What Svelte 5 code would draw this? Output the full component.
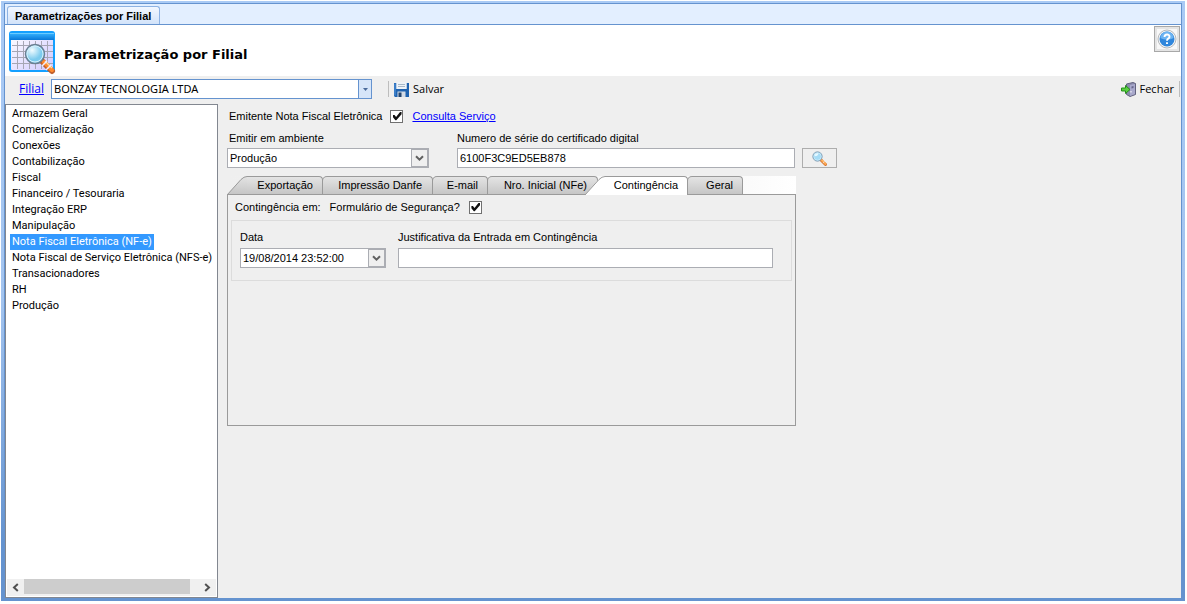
<script>
  let sections = [
    "Armazem Geral",
    "Comercialização",
    "Conexões",
    "Contabilização",
    "Fiscal",
    "Financeiro / Tesouraria",
    "Integração ERP",
    "Manipulação",
    "Nota Fiscal Eletrônica (NF-e)",
    "Nota Fiscal de Serviço Eletrônica (NFS-e)",
    "Transacionadores",
    "RH",
    "Produção",
  ];
  let tabs = [
    { name: "Exportação", size: "first" },
    { name: "Impressão Danfe", size: "wide" },
    { name: "E-mail", size: "narrow" },
    { name: "Nro. Inicial (NFe)", size: "wide" },
    { name: "Contingência", size: "medium" },
    { name: "Geral", size: "narrow" },
  ];

  let section = "Nota Fiscal Eletrônica (NF-e)";
  let tab = "Contingência";
  let emitente = true;
  let seguranca = true;
  let certificado = "6100F3C9ED5EB878";
  let data = "19/08/2014 23:52:00";
  let justificativa = "";
</script>

{#snippet chevron()}
  <svg class="chevron" width="9" height="7" viewBox="0 0 9 7" aria-hidden="true">
    <path d="M1 1.2 4.5 4.7 8 1.2" fill="none" stroke="#606060" stroke-width="2" />
  </svg>
{/snippet}

{#snippet lens(size)}
  <svg width={size} height={size} viewBox="0 0 30 30" aria-hidden="true">
    <path d="m18 18 9 9" stroke="#d0783c" stroke-width="6" stroke-linecap="round" />
    <path d="m19 18 8 8" stroke="#ffa64c" stroke-width="4" stroke-linecap="round" />
    <path d="m21 18 5 5" stroke="#ffe0b0" stroke-width="1.2" />
    <path d="m22 24 3-3" stroke="#e8e8f0" stroke-width="1.5" />
    <circle cx="11" cy="11" r="9.2" fill="#a5dcf6" stroke="#6d8ba6" stroke-width="1.8" />
    <circle cx="11" cy="11" r="7.6" fill="none" stroke="#d9f1fc" stroke-width="1.2" />
    <path d="M5 10c0-4 4-6 8-5-1 4-4 6-8 5z" fill="#e6f8ff" />
  </svg>
{/snippet}

<main class="window">
  <nav class="window-tabs">
    <button class="window-tab">Parametrizações por Filial</button>
  </nav>

  <header>
    <div class="logo">
      <svg width="48" height="44" viewBox="0 0 48 44" aria-hidden="true">
        <defs>
          <linearGradient id="bar" x2="0" y2="1">
            <stop offset="0" stop-color="#38b4ff" />
            <stop offset="1" stop-color="#0878d8" />
          </linearGradient>
          <linearGradient id="sheet" x2="1" y2="1">
            <stop offset="0" stop-color="#ffffff" />
            <stop offset="1" stop-color="#cfc8ff" />
          </linearGradient>
          <radialGradient id="glass" cx=".35" cy=".3">
            <stop offset="0" stop-color="#f2fcff" />
            <stop offset="1" stop-color="#7ccbee" />
          </radialGradient>
        </defs>
        <rect x="1" y="1" width="44" height="39" rx="2" fill="url(#sheet)" stroke="#14a0ff" stroke-width="2" />
        <path d="M1 2h44v7H1z" fill="url(#bar)" />
        <path d="M1 2.5h44" stroke="#6bcbff" />
        <path d="M3 14.500h41M3 20.500h41M3 26.500h41M3 32.500h41M8.500 10v28M14.500 10v28M20.500 10v28M26.500 10v28M32.500 10v28M38.500 10v28" stroke="#a6a6b4" />
        <path d="m34 31 9 9" stroke="#c0602c" stroke-width="6" stroke-linecap="round" />
        <path d="m35 31 8 8" stroke="#ff8a2c" stroke-width="4" stroke-linecap="round" />
        <path d="m36 30 7 7" stroke="#ffd9a0" stroke-width="1.500" />
        <path d="m33 35 5-5M37 39l5-5" stroke="#eef" stroke-width="1.500" />
        <circle cx="26" cy="23" r="9.500" fill="url(#glass)" stroke="#6b7f92" stroke-width="1.500" />
        <circle cx="26" cy="23" r="8" fill="none" stroke="#d4f0fc" />
      </svg>
    </div>
    <h1>Parametrização por Filial</h1>
    <button class="help" aria-label="Ajuda">
      <svg width="20" height="20" viewBox="0 0 20 20" aria-hidden="true">
        <circle cx="10" cy="10" r="9" fill="#f4f4f4" stroke="#b4b8bc" />
        <circle cx="10" cy="10" r="7.500" fill="#2f86dc" />
        <path d="M3.500 9a6.500 6.500 0 0 1 13 0c-4 2-9 2-13 0z" fill="#6db4f2" />
        <path d="M7.500 8c0-3.300 5-3.300 5-.3 0 2-2.500 1.800-2.500 4M10 13.200v1.900" fill="none" stroke="#fff" stroke-width="1.900" />
      </svg>
    </button>
  </header>

  <div class="toolbar">
    <a class="filial-link" href="#filial">Filial</a>
    <div class="combo filial">
      <select aria-label="Filial">
        <option>BONZAY TECNOLOGIA LTDA</option>
      </select>
      <span class="arrow">
        <svg width="5" height="3" viewBox="0 0 5 3" aria-hidden="true"><path d="M0 0h5L2.500 3z" fill="#4a6a9a" /></svg>
      </span>
    </div>
    <span class="separator"></span>
    <button class="tool">
      <svg width="15" height="15" viewBox="0 0 15 15" aria-hidden="true">
        <path d="M0 1h2.500v6h10V1H15v14H1l-1-1z" fill="#1f63b0" />
        <path d="M1 1.500v12" stroke="#5a9ae0" />
        <path d="M2.500 0h10v7h-10z" fill="#eef3f8" />
        <path d="M4 2.500h7M4 4.500h7" stroke="#a8b8c8" />
        <path d="M3.500 9.500h8V15h-8z" fill="#d4dce6" />
        <path d="M4.500 10.500h3V15h-3z" fill="#24456e" />
      </svg>
      Salvar
    </button>
    <button class="tool close">
      <svg width="15" height="15" viewBox="0 0 15 15" aria-hidden="true">
        <path d="M5.500 2 12 .5l2.500 1v11L9 14.500l-3.500-2z" fill="#8c8cae" stroke="#62627e" />
        <path d="m9 3 5-1v10l-5 2z" fill="#a9a9cc" />
        <path d="m10.500 4.500 2-.5v2l-2 .5z" fill="#66668a" />
        <path d="M10 9v1.500" stroke="#fff" />
        <path d="M.5 6h4V3.500L9 7.500l-4.500 4V9h-4z" fill="#5ad040" stroke="#249018" />
      </svg>
      Fechar
    </button>
    <span class="grip"></span>
  </div>

  <div class="content">
    <aside>
      <ul>
        {#each sections as item}
          <li>
            <button class:selected={item === section} on:click={() => (section = item)}>{item}</button>
          </li>
        {/each}
      </ul>
      <div class="scrollbar">
        <button aria-label="Rolar para a esquerda">
          <svg width="7" height="9" viewBox="0 0 7 9" aria-hidden="true"><path d="M5.800 1 2 4.500 5.800 8" fill="none" stroke="#505050" stroke-width="2" /></svg>
        </button>
        <span class="thumb"></span>
        <button aria-label="Rolar para a direita">
          <svg width="7" height="9" viewBox="0 0 7 9" aria-hidden="true"><path d="M1.200 1 5 4.500 1.200 8" fill="none" stroke="#505050" stroke-width="2" /></svg>
        </button>
      </div>
    </aside>

    <section class="form">
      <div class="line emitter">
        <label for="emitente">Emitente Nota Fiscal Eletrônica</label>
        <input id="emitente" type="checkbox" bind:checked={emitente} />
        <a href="#consulta">Consulta Serviço</a>
      </div>

      <div class="fields">
        <div class="field ambiente">
          <label for="ambiente">Emitir em ambiente</label>
          <div class="combo">
            <select id="ambiente">
              <option>Produção</option>
            </select>
            <span class="arrow">{@render chevron()}</span>
          </div>
        </div>
        <div class="field grow">
          <label for="certificado">Numero de série do certificado digital</label>
          <input id="certificado" class="box" type="text" bind:value={certificado} />
        </div>
        <button class="search" aria-label="Pesquisar certificado">{@render lens(15)}</button>
      </div>

      <div class="pages">
        <div class="tabs" role="tablist">
          {#each tabs as t}
            {@const active = t.name === tab}
            <button
              role="tab"
              aria-selected={active}
              class="tab {t.size}"
              class:active
              on:click={() => (tab = t.name)}
            >
              {#if active || t.size === "first"}
                <svg width="20" height="19" viewBox="0 0 20 19" aria-hidden="true">
                  <defs>
                    <linearGradient id="tabfill" x2="0" y2="1">
                      <stop offset="0" stop-color="#e4e4e4" />
                      <stop offset="1" stop-color="#c4c4c4" />
                    </linearGradient>
                  </defs>
                  <path d="M0 19 14 3q3-3 6-3v19z" fill={active ? "#fff" : "url(#tabfill)"} />
                  <path d="M0 19 14 3.500q3-3 6-3" fill="none" stroke="#9a9a9a" />
                </svg>
              {/if}
              <span class="face">{t.name}</span>
            </button>
          {/each}
        </div>

        <div class="panel" role="tabpanel">
          <div class="line contingency">
            <span>Contingência em:</span>
            <label for="seguranca">Formulário de Segurança?</label>
            <input id="seguranca" type="checkbox" bind:checked={seguranca} />
          </div>
          <div class="group">
            <div class="field date">
              <label for="data">Data</label>
              <div class="combo">
                <input id="data" type="text" bind:value={data} />
                <button class="arrow" aria-label="Abrir calendário">{@render chevron()}</button>
              </div>
            </div>
            <div class="field grow">
              <label for="justificativa">Justificativa da Entrada em Contingência</label>
              <input id="justificativa" class="box" type="text" bind:value={justificativa} />
            </div>
          </div>
        </div>
      </div>
    </section>
  </div>
</main>

<style>
  :global(body) {
    background: #fff;
  }

  .window,
  .window * {
    box-sizing: border-box;
  }

  .window {
    display: flex;
    flex-direction: column;
    min-height: calc(100vh - 4px);
    margin: 1px 2px 3px 1px;
    padding: 2px 3px 2px;
    background: linear-gradient(#a9caf5, #a3c4ef 50%, #6593cf 90%);
    font-family: "Liberation Sans", Arial, sans-serif;
    font-size: 11px;
    line-height: 14px;
    color: #000;
  }

  button,
  input,
  select {
    margin: 0;
    padding: 0;
    border: 0;
    border-radius: 0;
    outline: 0;
    background: none;
    font: inherit;
    color: inherit;
  }

  svg {
    display: block;
    flex: none;
  }

  a {
    color: #00f;
  }

  .window-tabs {
    display: flex;
    align-items: flex-end;
    height: 22px;
    padding-left: 2px;
    border: 1px solid #6593cf;
    background: #e3efff;
  }

  .window-tab {
    height: 18px;
    padding: 0 8px 0 7px;
    border: 1px solid #8db2e3;
    border-bottom: 0;
    border-radius: 3px 3px 0 0;
    background: linear-gradient(#f2f7ff, #d2e3fa);
    font-weight: bold;
  }

  header {
    display: flex;
    align-items: center;
    height: 51px;
    border: solid #6593cf;
    border-width: 0 1px;
    background: #fff;
  }

  .logo {
    padding: 4px 7px 0 4px;
  }

  h1 {
    flex: 1;
    margin: 0;
    padding-top: 8px;
    font-family: "DejaVu Sans", Verdana, sans-serif;
    font-size: 13px;
    line-height: 18px;
  }

  .help {
    display: grid;
    place-items: center;
    align-self: flex-start;
    width: 26px;
    height: 26px;
    margin: 1px 1px 0 0;
    border: 1px solid #a8a8a8;
    background: #f8f8f8;
    box-shadow: inset 0 0 0 2px #e4e4e4;
  }

  .toolbar {
    display: flex;
    align-items: center;
    height: 26px;
    padding: 0 1px 0 14px;
    border: solid #6593cf;
    border-width: 0 1px;
    background: #efefef;
    font-family: "Open Sans", "Segoe UI", sans-serif;
    font-size: 11px;
    line-height: 16px;
  }

  .filial-link {
    width: 32px;
    font-size: 12px;
  }

  .separator,
  .grip {
    width: 1px;
    height: 16px;
    background: #bdbdbd;
  }

  .separator {
    margin: 0 5px 0 16px;
  }

  .tool {
    display: flex;
    align-items: center;
    gap: 4px;
    height: 18px;
  }

  .close {
    margin: 0 5px 0 auto;
  }

  .combo {
    display: flex;
    position: relative;
    height: 20px;
    border: 1px solid #abadb3;
    background: #fff;
  }

  .combo select,
  .combo input {
    flex: 1;
    min-width: 0;
    padding: 0 20px 0 2px;
    appearance: none;
  }

  .combo .arrow {
    display: grid;
    place-items: center;
    position: absolute;
    top: 0;
    right: 0;
    width: 17px;
    height: 18px;
    border: 1px solid #abadb3;
    background: #efefef;
    pointer-events: none;
  }

  .combo button.arrow {
    pointer-events: auto;
  }

  .filial {
    width: 321px;
    border-color: #6593cf;
    font-family: "Noto Sans", sans-serif;
  }

  .filial .arrow {
    width: 13px;
    border-width: 0 0 0 1px;
    border-color: #6593cf;
    background: #d6e5f9;
  }

  .content {
    display: flex;
    flex: 1;
    gap: 9px;
    padding-top: 2px;
    border: 1px solid #6593cf;
    border-top: 0;
    background: #efefef;
  }

  aside {
    display: flex;
    flex-direction: column;
    flex: none;
    width: 213px;
    border: 1px solid #828790;
    background: #fff;
  }

  ul {
    flex: 1;
    margin: 0;
    padding: 1px 4px;
    font-family: Roboto, sans-serif;
    list-style: none;
  }

  li {
    height: 16px;
  }

  li button {
    display: block;
    height: 16px;
    padding: 0 2px;
    white-space: nowrap;
  }

  li .selected {
    background: #39f;
    color: #fff;
  }

  .scrollbar {
    display: flex;
    height: 17px;
    margin: 0 1px 1px;
    background: #f0f0f0;
  }

  .scrollbar button {
    display: grid;
    place-items: center;
    width: 17px;
  }

  .thumb {
    flex: 1;
    height: 15px;
    margin-right: 9px;
    background: #cdcdcd;
  }

  .form {
    flex: 1;
    max-width: 610px;
    padding-top: 4px;
  }

  .line {
    display: flex;
    align-items: center;
    height: 18px;
  }

  .emitter {
    gap: 8px;
    height: 16px;
    padding-left: 2px;
  }

  .emitter a {
    padding-left: 1px;
  }

  .fields {
    display: flex;
    align-items: flex-end;
    padding-top: 7px;
  }

  input[type="checkbox"] {
    flex: none;
    width: 13px;
    height: 13px;
    border: 1px solid #707070;
    background: #fff;
    appearance: none;
  }

  input[type="checkbox"]:checked::before {
    display: block;
    height: 11px;
    background: #111;
    clip-path: polygon(14% 42%, 28% 42%, 42% 58%, 78% 14%, 92% 14%, 92% 34%, 44% 88%, 36% 88%, 14% 62%);
    content: "";
  }

  .field {
    display: flex;
    flex-direction: column;
    gap: 3px;
  }

  .ambiente label {
    padding-left: 2px;
  }

  .ambiente {
    width: 202px;
    margin-right: 28px;
  }

  .grow {
    flex: 1;
  }

  .box {
    width: 100%;
    height: 20px;
    padding: 0 2px;
    border: 1px solid #abadb3;
    background: #fff;
  }

  .search {
    display: grid;
    place-items: center;
    width: 35px;
    height: 20px;
    margin-left: 7px;
    border: 1px solid #adadad;
    background: #efefef;
  }

  .pages {
    max-width: 569px;
    padding-top: 8px;
  }

  .tabs {
    display: flex;
    height: 18px;
    background: linear-gradient(90deg, #efefef, #fafafa 90%, #fff);
  }

  .tab {
    display: flex;
    height: 18px;
    margin-left: -1px;
    overflow: hidden;
  }

  .tab.first {
    margin-left: 0;
  }

  /* covers the panel's top border so that the page looks joined to its tab */
  .tab.active {
    position: relative;
    height: 19px;
    margin-left: -13px;
  }

  .face {
    height: 19px;
    border: 1px solid #9a9a9a;
    border-bottom: 0;
    border-radius: 5px 4px 0 0;
    background: linear-gradient(#e4e4e4, #c4c4c4);
    line-height: 17px;
    text-align: right;
    white-space: nowrap;
  }

  .first .face,
  .active .face {
    border-left: 0;
    border-top-left-radius: 0;
  }

  .first .face {
    width: 76px;
    padding-right: 9px;
  }

  .wide .face {
    width: 111px;
    padding-right: 10px;
  }

  .narrow .face {
    width: 56px;
    padding-right: 9px;
  }

  .medium .face {
    width: 83px;
    padding-right: 9px;
  }

  .active .face {
    background: #fff;
  }

  .panel {
    min-height: 232px;
    padding: 3px 3px 0;
    border: 1px solid #9a9a9a;
  }

  .contingency {
    gap: 9px;
    padding-left: 4px;
  }

  .group {
    display: flex;
    gap: 12px;
    height: 61px;
    margin-top: 4px;
    padding: 9px 18px 0 8px;
    border: 1px solid #dcdcdc;
  }

  .group .field {
    gap: 4px;
  }

  .date {
    width: 146px;
  }
</style>
